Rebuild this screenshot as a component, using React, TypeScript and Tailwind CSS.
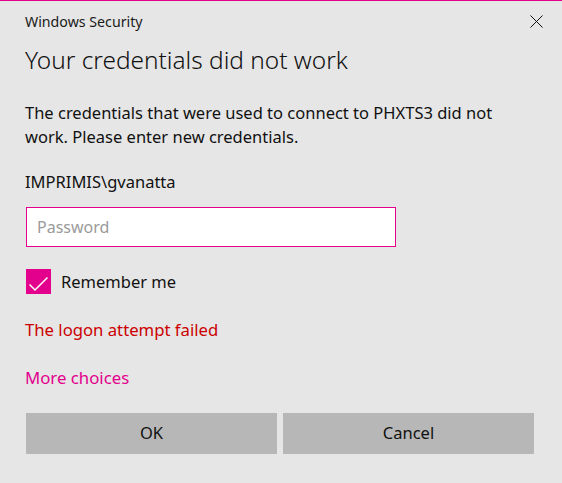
const font = { fontFamily: '"Segoe UI", "Noto Sans", "Open Sans", sans-serif' };

export default function App() {
    return (
        <main style={font} className="w-[562px] h-[483px] bg-[#e6e6e6] border-t border-[#e3008c] text-[#000] overflow-hidden">
            {/* Title bar */}
            <div className="h-[41px] flex items-center justify-between pl-[25px] pr-[19px]">
                <span className="text-[14.2px] leading-[20px] text-[#1a1a1a]">Windows Security</span>
                <button className="w-[13px] h-[13px] flex items-center justify-center">
                    <svg width="13" height="13" viewBox="0 0 13 13" fill="none">
                        <path d="M0.5 0.5 L12.5 12.5 M12.5 0.5 L0.5 12.5" stroke="#111" strokeWidth="1" />
                    </svg>
                </button>
            </div>

            <div className="px-[25px]">
                <h1 className="text-[24.4px] leading-[36px] font-light text-[#111]">Your credentials did not work</h1>

                <p className="mt-[23px] text-[16.5px] leading-[24px] text-[#111]">
                    The credentials that were used to connect to PHXTS3 did not
                    <br />
                    work. Please enter new credentials.
                </p>

                <p className="mt-[21px] text-[16.5px] leading-[24px] text-[#111]">IMPRIMIS\gvanatta</p>

                <div className="mt-[13px] ml-px w-[370px] h-[40px] bg-white border border-[#e3008c] flex items-center px-[10px]">
                    <span className="text-[16px] text-[#9a9a9a]">Password</span>
                </div>

                <div className="mt-[22px] ml-px flex items-center gap-[10px] h-[25px]">
                    <div className="w-[25px] h-[25px] bg-[#e3008c] flex items-center justify-center">
                        <svg width="25" height="25" viewBox="0 0 25 25" fill="none">
                            <path d="M3.5 15.5 L9 21 L21.5 8.5" stroke="white" strokeWidth="1.5" />
                        </svg>
                    </div>
                    <span className="text-[16.5px] leading-[24px] text-[#111]">Remember me</span>
                </div>

                <p className="mt-[24px] text-[16.7px] leading-[24px] text-[#cc0000]">The logon attempt failed</p>

                <p className="mt-[24px] text-[16.8px] leading-[24px] text-[#e3008c]">More choices</p>

                <div className="mt-[23px] ml-px flex gap-[6px]">
                    <button className="w-[251px] h-[41px] bg-[#b7b7b7] text-[16.5px] text-[#111]">OK</button>
                    <button className="w-[251px] h-[41px] bg-[#b7b7b7] text-[16.5px] text-[#111]">Cancel</button>
                </div>
            </div>
        </main>
    );
}
